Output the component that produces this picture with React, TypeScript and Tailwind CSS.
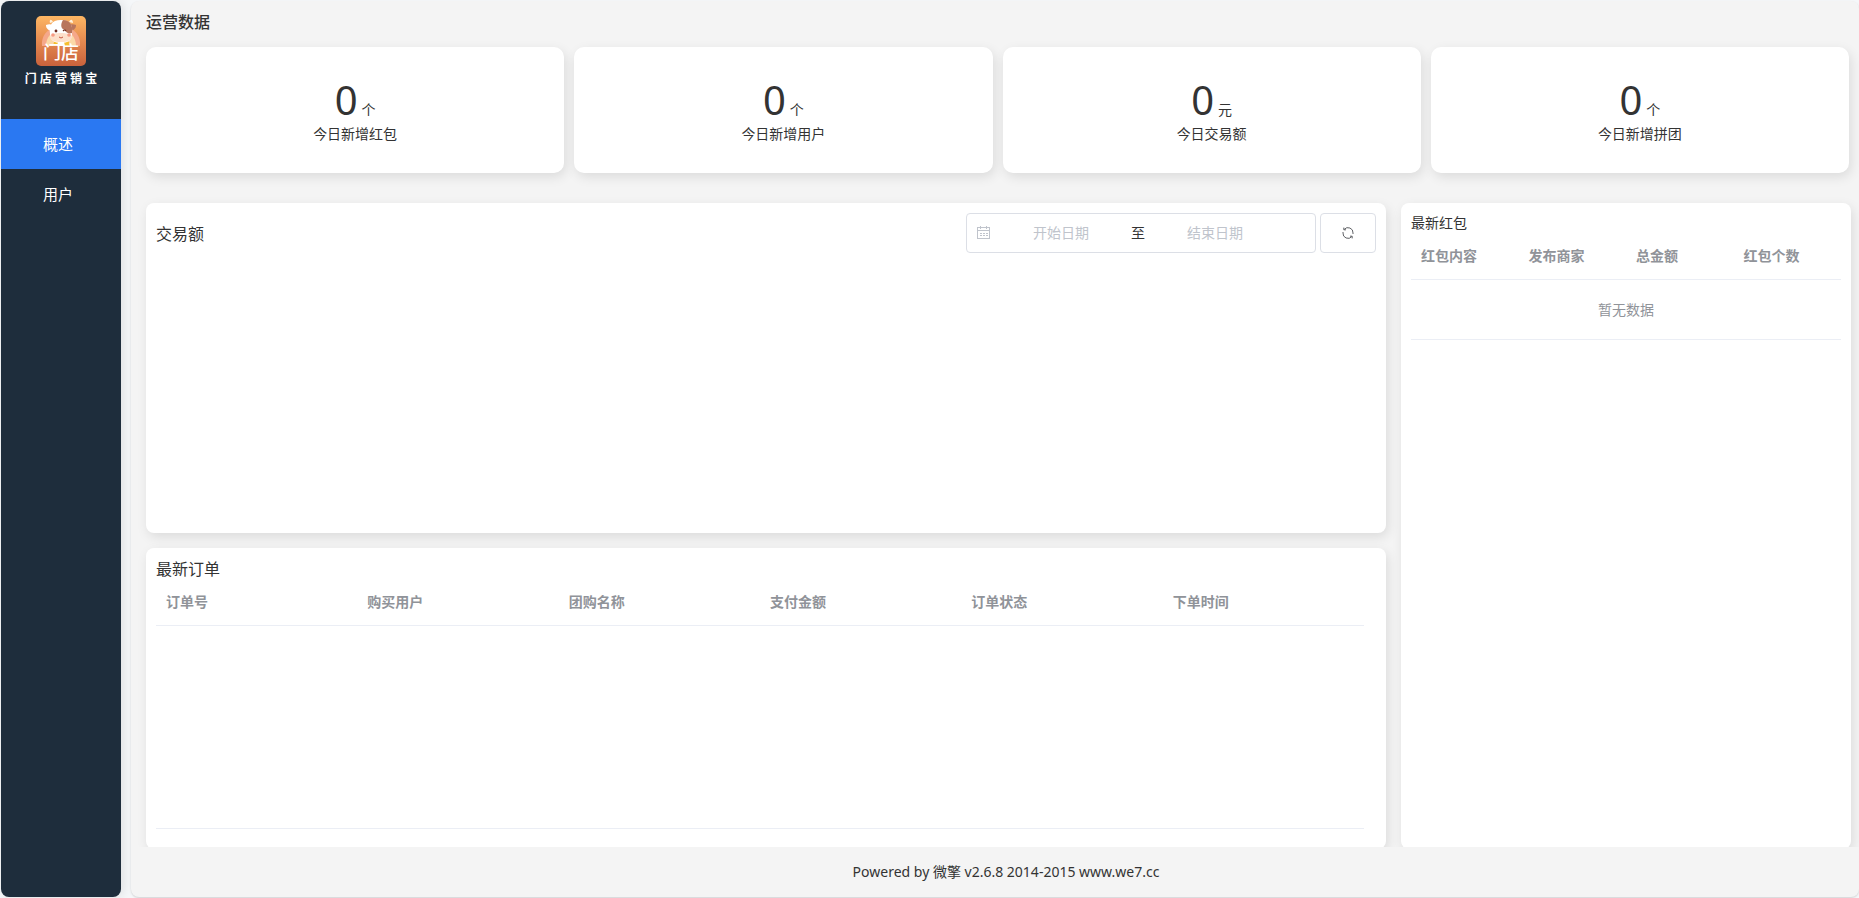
import React from "react";

const stats = [
  { value: "0", unit: "个", label: "今日新增红包" },
  { value: "0", unit: "个", label: "今日新增用户" },
  { value: "0", unit: "元", label: "今日交易额" },
  { value: "0", unit: "个", label: "今日新增拼团" },
];

const orderColumns = ["订单号", "购买用户", "团购名称", "支付金额", "订单状态", "下单时间"];
const packetColumns = ["红包内容", "发布商家", "总金额", "红包个数"];

function Logo() {
  return (
    <svg width="50" height="50" viewBox="0 0 50 50" className="block" aria-hidden="true">
      <defs>
        <linearGradient id="logoBg" x1="0" y1="0" x2="0" y2="1">
          <stop offset="0" stopColor="#fdb663" />
          <stop offset="0.5" stopColor="#e58a50" />
          <stop offset="1" stopColor="#c9623c" />
        </linearGradient>
      </defs>
      <rect width="50" height="50" rx="5" fill="url(#logoBg)" />
      <path d="M6 30C5 18 13 11 25 11s20 7 19 19z" fill="#f5a88a" />
      <path d="M10 30c0-9 6-16 15-16s15 7 15 16z" fill="#fbd9a8" />
      <path d="M18 26c2-2 12-2 15 0l1 4H17z" fill="#f6bf2e" />
      <path d="M22 26h6l1 4h-8z" fill="#fff" />
      <path d="M17 6c-2-4-4-2-3 1zM33 6c2-4 4-2 4 1z" fill="#fff2dc" />
      <path d="M10 9c3-1 5-1 7 1l-1 4c-3 1-6-1-6-5z" fill="#fff" />
      <path d="M40 9c-3-1-5-1-7 1l1 4c3 1 6-1 6-5z" fill="#b8755c" />
      <path d="M14 18c-1-8 1-14 11-14s12 6 11 14c0 6-4 9-11 9s-11-3-11-9z" fill="#fff" />
      <path d="M27 4c7 0 10 5 9 13-3 1-6 0-7-3-4-1-5-5-2-10z" fill="#b8755c" />
      <path d="M14 20c3-4 19-4 22 0 0 4-4 6-11 6s-11-2-11-6z" fill="#fde0cb" />
      <circle cx="20" cy="15" r="1.4" fill="#6e2b20" />
      <path d="M27 15q2-2 3 0" stroke="#6e2b20" strokeWidth="1.2" fill="none" />
      <circle cx="17" cy="19" r="1.8" fill="#f79b83" />
      <circle cx="33" cy="19" r="1.8" fill="#f79b83" />
      <path d="M23 21q2 2 4 0" stroke="#c6573f" strokeWidth="1" fill="none" />
      <text x="25" y="43" textAnchor="middle" fontSize="18" fontWeight="500" fill="#fff" className="font-['Noto_Sans_CJK_SC',sans-serif]">
        门店
      </text>
    </svg>
  );
}

function CalendarIcon() {
  return (
    <svg width="14" height="14" viewBox="0 0 14 14" fill="none" stroke="#c0c4cc" className="mr-0.5 shrink-0" aria-hidden="true">
      <rect x="0.5" y="1.5" width="12" height="11" />
      <path d="M1 4.5h11M3.5 0v3M9.5 0v3" />
      <path d="M3 7.5h2M6 7.5h2M9 7.5h2M3 9.5h2M6 9.5h2M9 9.5h2" />
    </svg>
  );
}

function RefreshIcon() {
  return (
    <svg width="14" height="14" viewBox="0 0 14 14" fill="none" stroke="#606266" aria-hidden="true">
      <path d="M3.2 3.4A5 5 0 0 1 12 7v1M10.8 10.6A5 5 0 0 1 2 7V6" />
      <path d="M2.8 1.6v2.2H5M11.2 12.4v-2.2H9" />
    </svg>
  );
}

function HeaderRow({ columns }: { columns: string[] }) {
  return (
    <thead>
      <tr className="border-b border-[#ebeef5]">
        {columns.map((c) => (
          <th key={c} scope="col" className="px-2.5 pt-[11px] pb-3 text-left text-sm leading-[23px] font-bold text-[#909399]">
            {c}
          </th>
        ))}
      </tr>
    </thead>
  );
}

const card = "bg-white shadow-[2px_4px_12px_rgba(0,0,0,0.1)]";

export default function App() {
  return (
    <div className="flex h-screen gap-2.5 bg-[#f5f7f9] py-px pl-px font-['Noto_Sans','Noto_Sans_CJK_SC',sans-serif] text-sm text-[#333]">
      <aside className="w-[120px] shrink-0 overflow-hidden rounded-lg bg-[#1e2d3c] shadow-[2px_0_12px_rgba(0,0,0,0.1)]">
        <div className="flex h-[118px] flex-col items-center pt-[15px]">
          <Logo />
          <div className="mt-1 text-xs leading-[18px] font-bold text-white">门 店 营 销 宝</div>
        </div>
        <nav className="text-[15px] leading-[50px] text-white">
          <a href="#overview" aria-current="page" className="block bg-[#2a78f2] pr-1.5 text-center">概述</a>
          <a href="#users" className="block pr-1.5 text-center">用户</a>
        </nav>
      </aside>

      <div className="flex min-w-0 flex-1 flex-col rounded-lg bg-[#f4f4f4] shadow-[0_1px_2px_rgba(0,0,0,0.15)]">
        <main className="min-h-0 flex-1 overflow-hidden pl-[15px]">
          <h1 className="pt-2 text-base leading-[26px] font-medium">运营数据</h1>
          <section className="mt-3 grid grid-cols-4 gap-2.5 pr-2.5">
            {stats.map((s) => (
              <div key={s.label} className={`${card} flex h-[126px] flex-col items-center rounded-[10px] pt-[29px]`}>
                <div className="h-12 leading-[48px]">
                  <span className="text-[40px] leading-[48px]">{s.value}</span> {s.unit}
                </div>
                <div className="leading-5">{s.label}</div>
              </div>
            ))}
          </section>

          <div className="mt-[30px] flex gap-[15px] pr-2">
            <div className="flex min-w-0 flex-1 flex-col gap-[15px]">
              <section className={`${card} h-[330px] rounded-lg p-2.5`}>
                <div className="flex items-center gap-1">
                  <h2 className="mr-auto pt-0.5 text-base">交易额</h2>
                  <div className="flex h-10 w-[350px] items-center rounded border border-[#dcdfe6] px-2.5">
                    <CalendarIcon />
                    <input aria-label="开始日期" placeholder="开始日期" className="w-[136px] text-center outline-none placeholder:text-[#c0c4cc]" />
                    <span className="w-[18px] text-center">至</span>
                    <input aria-label="结束日期" placeholder="结束日期" className="w-[136px] text-center outline-none placeholder:text-[#c0c4cc]" />
                  </div>
                  <button type="button" aria-label="刷新" className="flex h-10 w-14 items-center justify-center rounded border border-[#dcdfe6]">
                    <RefreshIcon />
                  </button>
                </div>
              </section>
              <section className={`${card} rounded-lg pt-[9px] pr-[22px] pb-5 pl-2.5`}>
                <h2 className="text-base leading-6">最新订单</h2>
                <div className="-mt-0.5 h-[250px] border-b border-[#ebeef5]">
                  <table className="w-full table-fixed">
                    <HeaderRow columns={orderColumns} />
                  </table>
                </div>
              </section>
            </div>
            <section className={`${card} w-[450px] shrink-0 rounded-lg p-2.5`}>
              <h2 className="leading-5">最新红包</h2>
              <table className="w-full table-fixed">
                <HeaderRow columns={packetColumns} />
                <tbody>
                  <tr className="border-b border-[#ebeef5]">
                    <td colSpan={4} className="h-[60px] text-center text-[#909399]">暂无数据</td>
                  </tr>
                </tbody>
              </table>
            </section>
          </div>
        </main>
        <footer className="shrink-0 pl-[22px] text-center leading-[50px]">
          Powered by 微擎 v2.6.8 2014-2015 www.we7.cc
        </footer>
      </div>
    </div>
  );
}
